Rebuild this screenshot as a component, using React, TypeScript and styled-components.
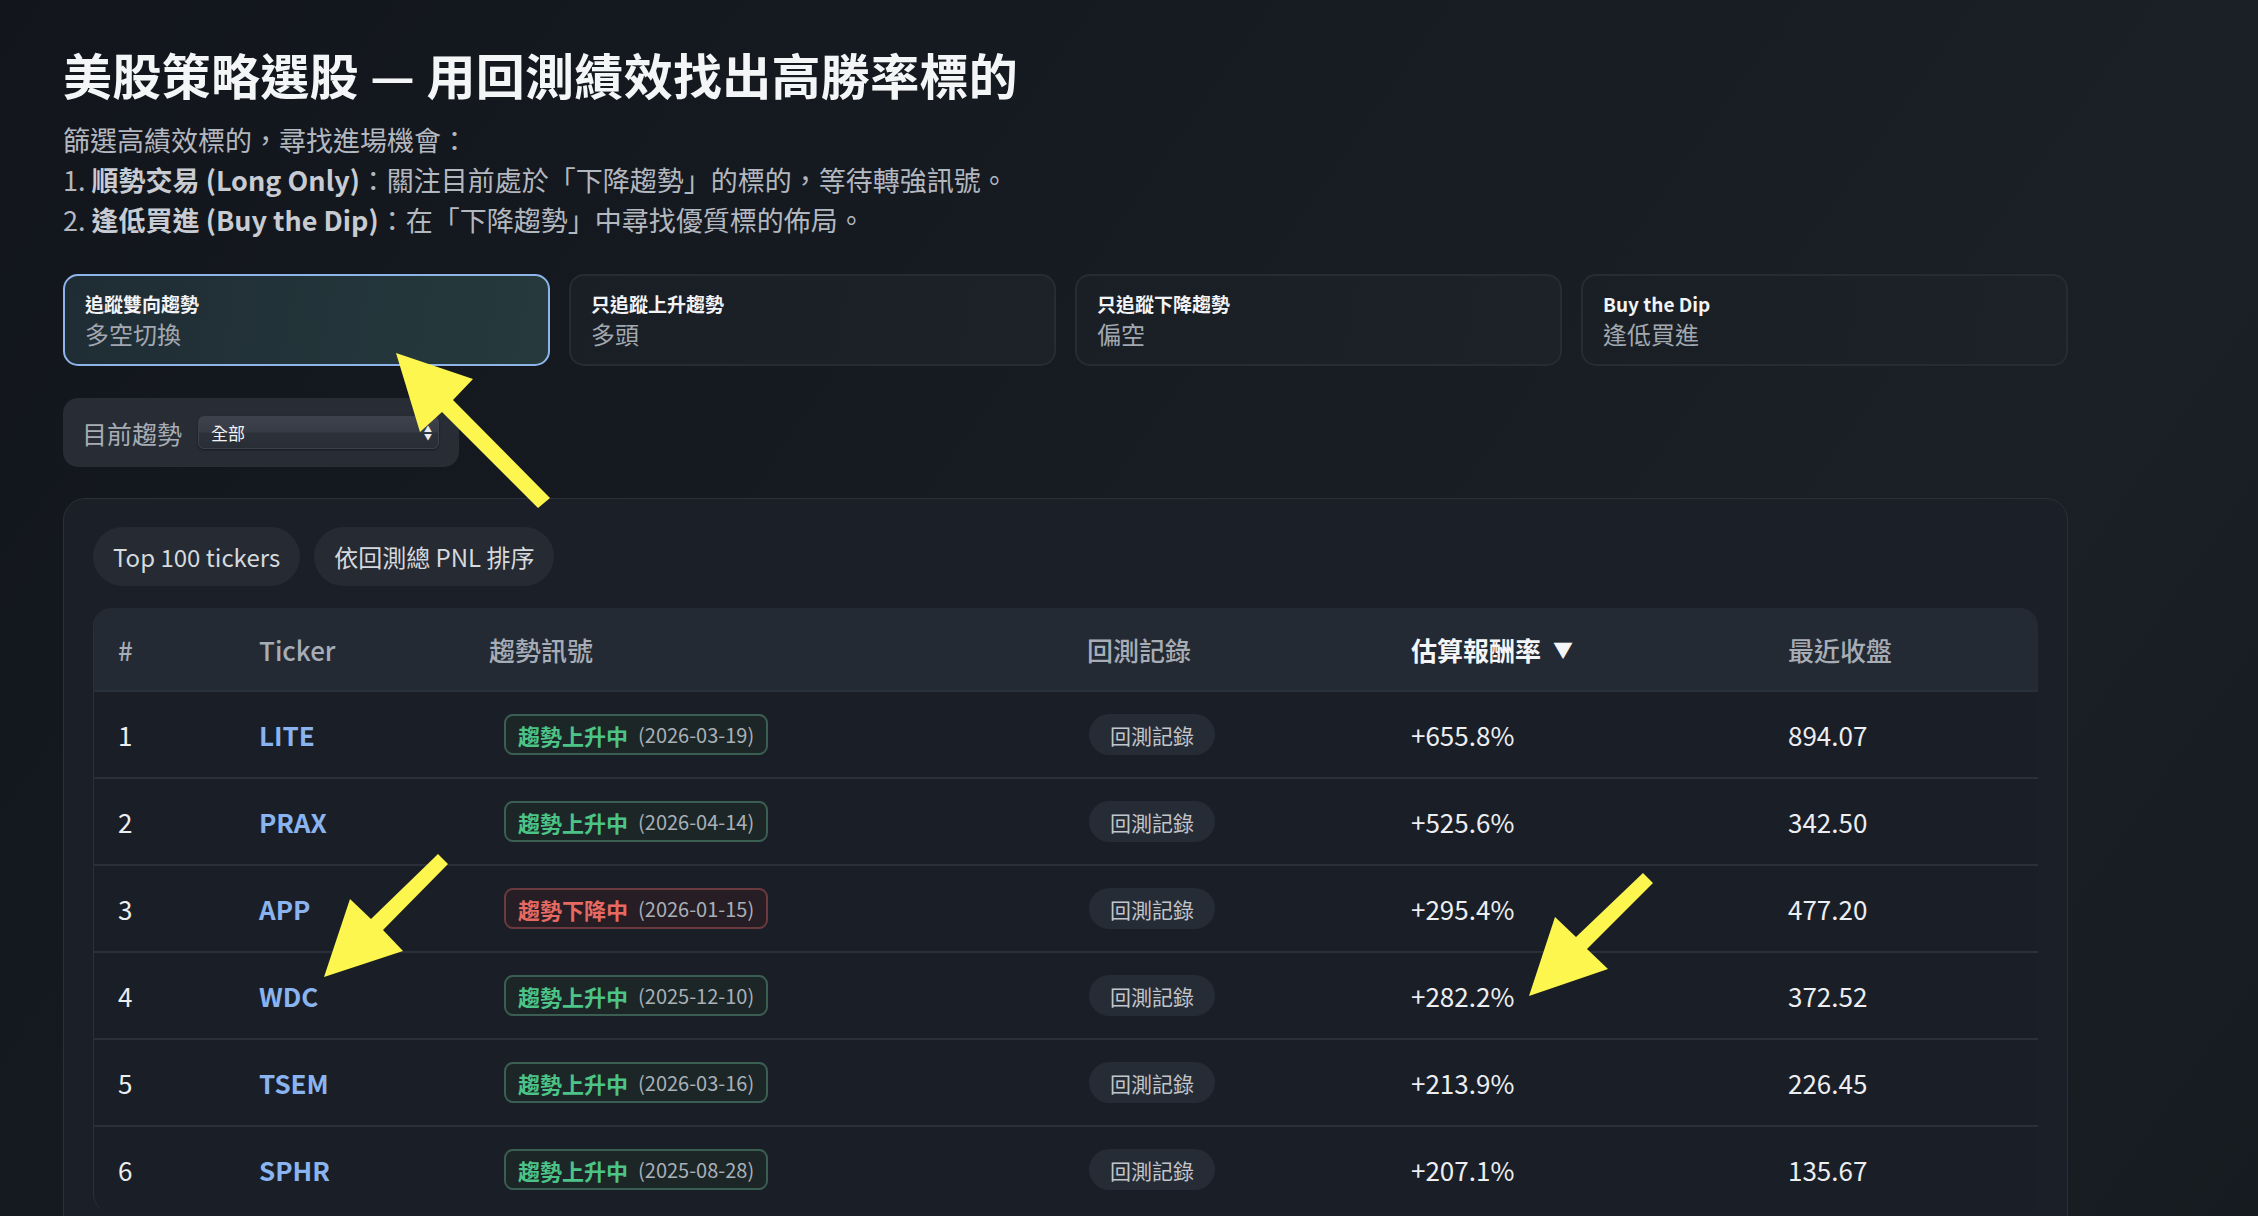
import React from 'react';
import styled, { createGlobalStyle } from 'styled-components';

const GlobalStyle = createGlobalStyle`
  html, body {
    margin: 0;
    padding: 0;
  }
  body {
    background: linear-gradient(125deg, #12161c 0%, #171c22 45%, #1a2026 75%, #161b20 100%);
    min-height: 100vh;
    overflow: hidden;
    font-family: "Noto Sans CJK TC", "Noto Sans", sans-serif;
    color: #e8eaed;
  }
`;

type Trend = 'up' | 'down';

interface TickerRow {
  rank: number;
  ticker: string;
  trend: Trend;
  date: string;
  pnl: string;
  close: string;
}

const rows: TickerRow[] = [
  { rank: 1, ticker: 'LITE', trend: 'up', date: '2026-03-19', pnl: '+655.8%', close: '894.07' },
  { rank: 2, ticker: 'PRAX', trend: 'up', date: '2026-04-14', pnl: '+525.6%', close: '342.50' },
  { rank: 3, ticker: 'APP', trend: 'down', date: '2026-01-15', pnl: '+295.4%', close: '477.20' },
  { rank: 4, ticker: 'WDC', trend: 'up', date: '2025-12-10', pnl: '+282.2%', close: '372.52' },
  { rank: 5, ticker: 'TSEM', trend: 'up', date: '2026-03-16', pnl: '+213.9%', close: '226.45' },
  { rank: 6, ticker: 'SPHR', trend: 'up', date: '2025-08-28', pnl: '+207.1%', close: '135.67' },
];

const modes = [
  { label: '追蹤雙向趨勢', value: '多空切換', active: true },
  { label: '只追蹤上升趨勢', value: '多頭', active: false },
  { label: '只追蹤下降趨勢', value: '偏空', active: false },
  { label: 'Buy the Dip', value: '逢低買進', active: false },
];

const columns = '141px 230px 598px 324px 377px 1fr';

export default function App() {
  return (
    <Root>
      <GlobalStyle />
      <Page>
        <Title>美股策略選股 — 用回測績效找出高勝率標的</Title>
        <Intro>
          篩選高績效標的，尋找進場機會：
          <br />
          1. <strong>順勢交易 (Long Only)</strong>：關注目前處於「下降趨勢」的標的，等待轉強訊號。
          <br />
          2. <strong>逢低買進 (Buy the Dip)</strong>：在「下降趨勢」中尋找優質標的佈局。
        </Intro>

        <ModeGrid>
          {modes.map((m) => (
            <ModeCard key={m.label} $active={m.active}>
              <ModeLabel>{m.label}</ModeLabel>
              <ModeValue>{m.value}</ModeValue>
            </ModeCard>
          ))}
        </ModeGrid>

        <FilterBox>
          <FilterLabel>目前趨勢</FilterLabel>
          <SelectBox>
            <span>全部</span>
            <SelectArrows>
              <span>▲</span>
              <span>▼</span>
            </SelectArrows>
          </SelectBox>
        </FilterBox>

        <Panel>
          <PillRow>
            <Pill>Top 100 tickers</Pill>
            <Pill>依回測總 PNL 排序</Pill>
          </PillRow>

          <Table>
            <HeaderRow>
              <HeadCell>#</HeadCell>
              <HeadCell>Ticker</HeadCell>
              <HeadCell>趨勢訊號</HeadCell>
              <HeadCell>回測記錄</HeadCell>
              <HeadCell $active>
                估算報酬率 <SortMark>▼</SortMark>
              </HeadCell>
              <HeadCell>最近收盤</HeadCell>
            </HeaderRow>
            {rows.map((r) => (
              <BodyRow key={r.ticker}>
                <Cell>{r.rank}</Cell>
                <Cell>
                  <TickerLink>{r.ticker}</TickerLink>
                </Cell>
                <Cell>
                  <TrendBadge $trend={r.trend}>
                    <TrendText $trend={r.trend}>{r.trend === 'up' ? '趨勢上升中' : '趨勢下降中'}</TrendText>
                    <TrendDate>({r.date})</TrendDate>
                  </TrendBadge>
                </Cell>
                <Cell>
                  <RecordButton>回測記錄</RecordButton>
                </Cell>
                <Cell>{r.pnl}</Cell>
                <Cell>{r.close}</Cell>
              </BodyRow>
            ))}
          </Table>
        </Panel>
      </Page>

      <Annotations viewBox="0 0 2258 1216" width="2258" height="1216">
        <polygon points="396,353 473,379 453,400 550,498 538,508 442,412 420,432" />
        <polygon points="324,977 350,899 371,919 438,854 448,864 383,930 403,951" />
        <polygon points="1529,996 1555,917 1576,937 1643,873 1653,883 1587,949 1608,969" />
      </Annotations>
    </Root>
  );
}

const Root = styled.div`
  position: relative;
  min-height: 1216px;
`;

const Page = styled.main`
  width: 2005px;
  padding: 45px 0 0 63px;
`;

const Title = styled.h1`
  margin: 0;
  font-size: 49px;
  line-height: 58px;
  font-weight: 700;
  color: #f4f5f7;
  letter-spacing: 0.3px;
`;

const Intro = styled.p`
  margin: 17px 0 0;
  font-size: 27px;
  line-height: 40px;
  color: #b3b8c0;

  strong {
    font-weight: 700;
    color: #c8ccd2;
  }
`;

const ModeGrid = styled.div`
  margin-top: 34px;
  display: grid;
  grid-template-columns: repeat(4, 1fr);
  gap: 19px;
`;

const ModeCard = styled.div<{ $active?: boolean }>`
  height: 92px;
  box-sizing: border-box;
  padding: 14px 20px 0;
  border-radius: 15px;
  border: 2px solid ${(p) => (p.$active ? '#8db5ea' : '#262c33')};
  background: ${(p) =>
    p.$active
      ? 'linear-gradient(100deg, #1f2c34 0%, #23353a 60%, #253a3c 100%)'
      : 'linear-gradient(100deg, #1a1f25 0%, #1c2227 100%)'};
`;

const ModeLabel = styled.div`
  font-size: 19px;
  line-height: 27px;
  font-weight: 700;
  color: #f2f3f5;
`;

const ModeValue = styled.div`
  font-size: 24px;
  line-height: 34px;
  color: #a2a8b0;
`;

const FilterBox = styled.div`
  margin-top: 32px;
  width: 396px;
  height: 69px;
  box-sizing: border-box;
  display: flex;
  align-items: center;
  gap: 16px;
  padding: 0 20px 0 19px;
  border-radius: 15px;
  background: #272c35;
`;

const FilterLabel = styled.span`
  font-size: 25px;
  color: #a7adb5;
`;

const SelectBox = styled.div`
  flex: 1;
  height: 33px;
  box-sizing: border-box;
  display: flex;
  align-items: center;
  justify-content: space-between;
  padding: 0 6px 0 12px;
  border-radius: 6px;
  border: 1px solid #3c414b;
  background: linear-gradient(180deg, #3d424d 0%, #363b46 48%, #2d3139 52%, #292d35 100%);
  box-shadow: 0 1px 2px rgba(0, 0, 0, 0.4);
  font-size: 17px;
  color: #f1f2f4;
`;

const SelectArrows = styled.span`
  display: flex;
  flex-direction: column;
  font-size: 8px;
  line-height: 8px;
  color: #e9ebee;
`;

const Panel = styled.section`
  margin-top: 31px;
  box-sizing: border-box;
  padding: 28px 29px 29px;
  border-radius: 22px;
  border: 1px solid #2a3038;
  background: #1b2028;
`;

const PillRow = styled.div`
  display: flex;
  gap: 14px;
`;

const Pill = styled.div`
  height: 59px;
  display: flex;
  align-items: center;
  padding: 0 20px;
  border-radius: 30px;
  background: #252a33;
  font-size: 24px;
  color: #d6d9dd;
`;

const Table = styled.div`
  margin-top: 22px;
  border-radius: 18px;
  overflow: hidden;
  border-left: 1px solid #2a3038;
  background: #1a1f27;
`;

const HeaderRow = styled.div`
  display: grid;
  grid-template-columns: ${columns};
  height: 82px;
  background: #242a33;
`;

const HeadCell = styled.div<{ $active?: boolean }>`
  display: flex;
  align-items: center;
  padding-left: 24px;
  font-size: 26px;
  font-weight: ${(p) => (p.$active ? 700 : 500)};
  color: ${(p) => (p.$active ? '#f4f5f7' : '#a7adb6')};
`;

const SortMark = styled.span`
  margin-left: 12px;
  font-size: 20px;
`;

const BodyRow = styled.div`
  display: grid;
  grid-template-columns: ${columns};
  height: 87px;
  box-sizing: border-box;
  border-top: 2px solid #2a3039;
`;

const Cell = styled.div`
  display: flex;
  align-items: center;
  padding-left: 24px;
  font-size: 26px;
  color: #eceef1;
`;

const TickerLink = styled.span`
  font-weight: 600;
  color: #8ab4f0;
`;

const TrendBadge = styled.div<{ $trend: Trend }>`
  margin-left: 15px;
  height: 41px;
  box-sizing: border-box;
  display: flex;
  align-items: center;
  gap: 10px;
  padding: 0 12px;
  border-radius: 9px;
  border: 2px solid ${(p) => (p.$trend === 'up' ? '#3b5e52' : '#6a3a3e')};
  background: ${(p) => (p.$trend === 'up' ? '#1c2627' : '#261e24')};
`;

const TrendText = styled.span<{ $trend: Trend }>`
  font-size: 22px;
  font-weight: 700;
  color: ${(p) => (p.$trend === 'up' ? '#4cc487' : '#e76a62')};
`;

const TrendDate = styled.span`
  font-size: 20px;
  color: #aab0b8;
`;

const RecordButton = styled.div`
  height: 41px;
  display: flex;
  align-items: center;
  padding: 0 21px;
  margin-left: 2px;
  border-radius: 21px;
  background: #262c35;
  font-size: 21px;
  color: #c2c6cc;
`;

const Annotations = styled.svg`
  position: absolute;
  top: 0;
  left: 0;
  pointer-events: none;

  polygon {
    fill: #fdf64e;
  }
`;
